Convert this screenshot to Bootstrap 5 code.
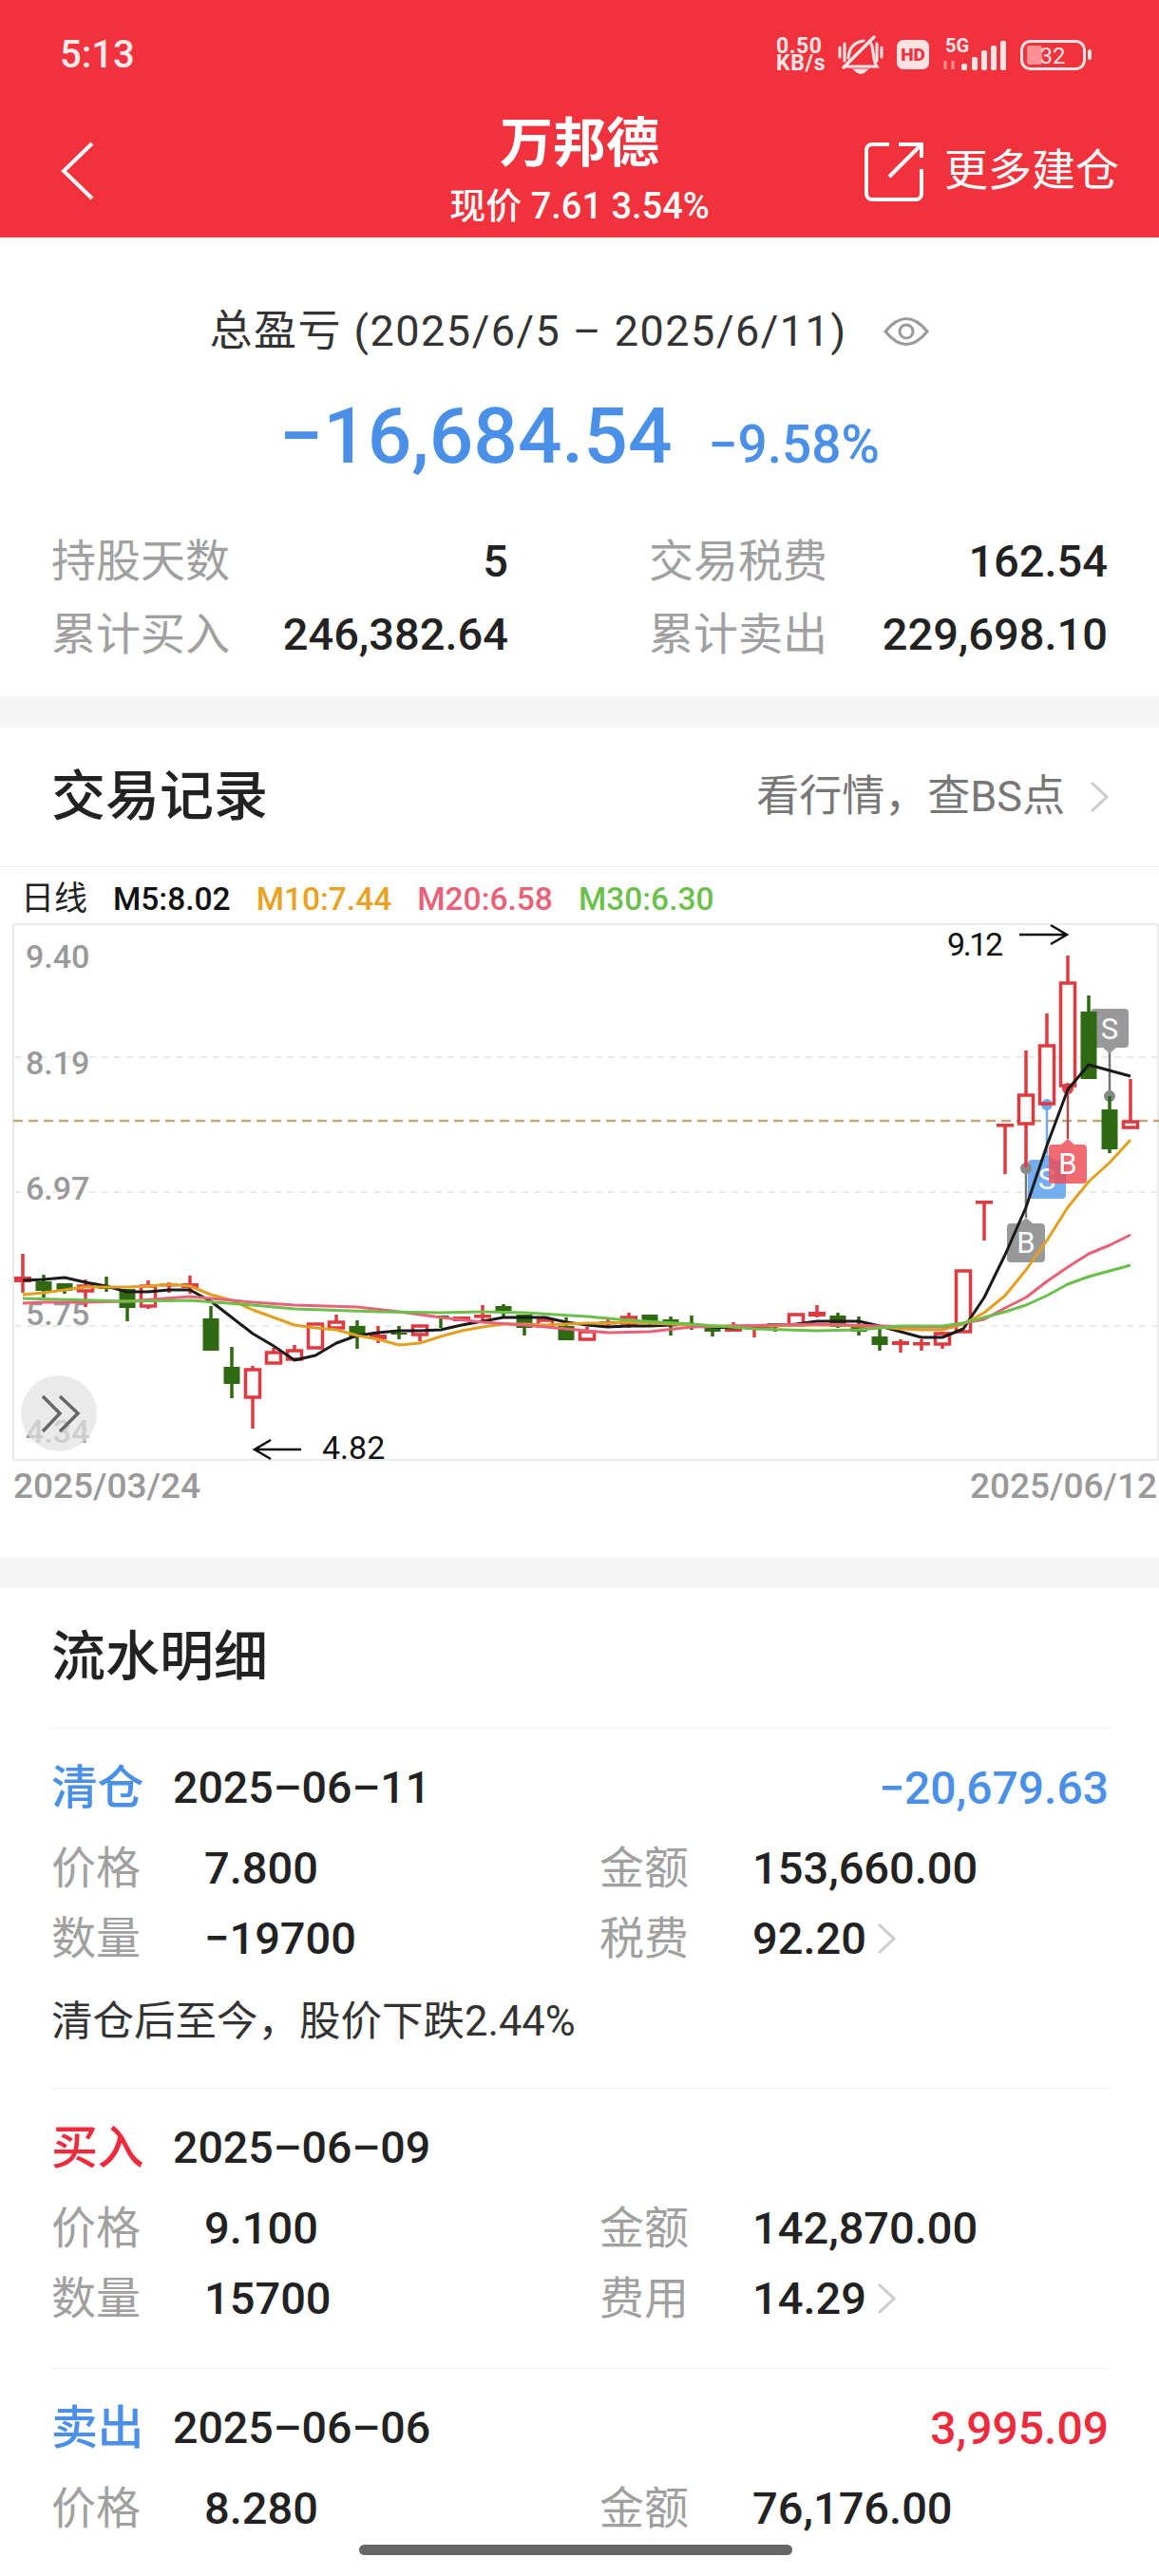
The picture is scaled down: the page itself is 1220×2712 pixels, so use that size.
<!doctype html>
<html lang="zh-CN">
<head>
<meta charset="utf-8">
<title>万邦德</title>
<link href="https://cdn.jsdelivr.net/npm/bootstrap@5.3.0/dist/css/bootstrap.min.css" rel="stylesheet">
<style>
html,body{height:2712px;overflow:hidden}
body{width:1220px;background:#f5f5f5;color:#222;font-family:Roboto,"Noto Sans CJK SC",sans-serif;font-size:46px;line-height:1.2}
.hdr{height:250px;background:#f1323c;color:#fff}
.stbar{height:100px;padding:23px 70px 0 63px}
.clock{font-size:40px;font-weight:500;color:#ffecec;line-height:70px}
.stico{gap:14px;color:#ffe6e6;height:70px}
.net{font-size:23px;font-weight:700;line-height:18px;width:51px;letter-spacing:.6px}
.navgrid{display:grid;grid-template-columns:1fr auto 1fr;height:150px}
.backwrap{padding:10px 0 0 62px}
.morewrap{padding:10px 42px 0 0;gap:22px;font-size:46px}
.ttl{font-size:56px;font-weight:700;line-height:64px;margin-top:19px}
.subttl{font-size:38px;font-weight:500;line-height:46px;margin-top:11px}
.sect-a{height:483px;padding-top:69px}
.rangeline{height:60px;font-size:45px;color:#333;letter-spacing:1.5px;gap:38px;padding-right:22px}
.rangeline span{white-space:nowrap}
.bigline{height:100px;margin-top:30px;color:#4a90e8;font-weight:500;gap:38px}
.bignum{font-size:82px;line-height:100px}
.bigpct{font-size:55px;line-height:1;padding-bottom:2px}
.stats{margin-top:43.5px}
.stat-l{padding:0 75px 0 54px}
.stat-r{padding:0 54px 0 73px}
.statrow{height:77px}
.lab{color:#a0a0a0;font-size:47px}
.val{color:#222;font-weight:500;font-size:47px}
.sect-b{margin-top:33px;height:874px}
.titlerow{height:147px;padding:0 53px 0 54px;border-bottom:1px solid #eee}
.hd2{font-size:57px;font-weight:500;color:#222}
.morelink{font-size:45px;color:#777;gap:26px}
.maline{height:59px;padding:8px 0 0 22px;font-size:33.5px;line-height:1}
.maline>span{margin-right:27px}
.c-ma0{color:#111;font-weight:500}
.c-ma1{color:#e8a21f;font-weight:500}
.c-ma2{color:#ea6078;font-weight:500}
.c-ma3{color:#6bc04b;font-weight:500}
.daylb{font-size:35px}
.chartbox{display:block;width:1220px;height:567px;overflow:visible}
.ovf{overflow:visible}
.tick{font-size:34px;font-weight:500;fill:#999;font-family:Roboto,sans-serif}
.note{font-size:34px;fill:#111;font-family:Roboto,sans-serif}
.mk{font-size:31px;fill:#fff;font-family:Roboto,sans-serif;text-anchor:middle}
.daterow{height:52px;padding:0 2px 0 14px;font-size:37px;font-weight:500;color:#999}
.sect-c{margin-top:32px;padding:0 53px;height:1040px}
.hdrow3{height:147px;padding-left:1px}
.item{border-top:1px solid #eee;padding:28px 0 36px}
.item.first{padding-bottom:34px}
.itemhead{height:70px;font-weight:500}
.kind{font-weight:500;width:129px;flex:none;font-size:49px;padding-left:1px;letter-spacing:-.5px}
.blue{color:#4a90e8}
.redtx{color:#ee2a3c}
.amt{font-size:48px;font-weight:500}
.datetx{font-size:46.5px;font-weight:500;color:#222}
.detail{margin-top:12px}
.drow{height:74px}
.drow .cell1{padding-left:1px}
.drow .cell2{padding-left:21px}
.lab2{width:161px;flex:none;color:#a0a0a0;font-size:47px}
.chev{margin-left:11px}
.tip{height:70px;margin-top:16px;padding-left:1px;font-size:43.5px;color:#333}
.homebar{position:absolute;left:378px;top:2679px;width:456px;height:11px;border-radius:6px;background:#666}
</style>
</head>
<body>
<header class="hdr">
  <div class="stbar d-flex justify-content-between align-items-start">
    <div class="clock">5:13</div>
    <div class="stico d-flex align-items-center">
      <div class="net"><div>0.50</div><div>KB/s</div></div>
      <svg width="48" height="42" viewBox="882 38 48 42" fill="none" stroke="currentColor" stroke-width="3" stroke-linecap="round" aria-hidden="true">
        <path d="M884 51V61M889 47V65M923 47V65M928 51V61"/>
        <path d="M893 62C894 50 901 45 909 44M917 47C920 52 918 64 923 71H890"/>
        <path d="M888 72L920 40" stroke-width="3.5"/>
        <path d="M901 75Q906 80 911 75Z" fill="currentColor"/>
      </svg>
      <svg width="34" height="32" viewBox="0 0 34 32" aria-hidden="true">
        <rect width="34" height="31" rx="7" fill="#ffe3e3"/>
        <text x="17" y="22" text-anchor="middle" font-family="Roboto,sans-serif" font-weight="900" font-size="19" fill="#f1323c">HD</text>
      </svg>
      <svg class="ovf" width="68" height="36" viewBox="992 40 68 36" aria-hidden="true">
        <text x="995" y="55" font-family="Roboto,sans-serif" font-weight="700" font-size="20" fill="currentColor">5G</text>
        <path d="M995 64V73M1003 64V73" stroke="#ff8f94" stroke-width="3"/>
        <g fill="currentColor"><rect x="1012" y="67" width="6" height="7" rx="2"/><rect x="1023" y="60" width="6" height="14" rx="2"/><rect x="1033" y="53" width="6" height="21" rx="2"/><rect x="1043" y="48" width="6" height="26" rx="2"/><rect x="1053" y="43" width="6" height="31" rx="2"/></g>
      </svg>
      <svg width="76" height="34" viewBox="1075 41 76 34" aria-hidden="true">
        <rect x="1076.5" y="43.5" width="66" height="29" rx="9" fill="none" stroke="currentColor" stroke-width="3"/>
        <rect x="1082" y="48" width="16" height="20" rx="3" fill="#ff8f94"/>
        <text x="1109" y="67" text-anchor="middle" font-family="Roboto,sans-serif" font-size="24" fill="currentColor">32</text>
        <rect x="1146" y="52" width="4" height="11" rx="2" fill="currentColor"/>
      </svg>
    </div>
  </div>
  <div class="navgrid">
    <div class="backwrap d-flex align-items-center">
      <svg width="40" height="64" viewBox="0 0 40 64" fill="none" stroke="#fff" stroke-width="4" aria-label="返回"><path d="M36 3L6 32L36 61" transform="translate(-1 0)"/></svg>
    </div>
    <div class="text-center">
      <div class="ttl">万邦德</div>
      <div class="subttl">现价 7.61 3.54%</div>
    </div>
    <div class="morewrap d-flex align-items-center justify-content-end">
      <svg width="64" height="64" viewBox="907 148 64 64" fill="none" stroke="#fff" stroke-width="4" aria-hidden="true">
        <path d="M935 152H917a6 6 0 0 0-6 6V204a6 6 0 0 0 6 6H963a6 6 0 0 0 6-6V178"/>
        <path d="M945 152H969V166M967 154L935 186"/>
      </svg>
      <span>更多建仓</span>
    </div>
  </div>
</header>

<section class="sect-a bg-white">
  <div class="rangeline d-flex align-items-center justify-content-center">
    <span>总盈亏 (2025/6/5 – 2025/6/11)</span>
    <svg width="48" height="34" viewBox="930 332 48 34" fill="none" stroke="#999" stroke-width="3" aria-label="显示"><path d="M932 349Q954 322 976 349Q954 376 932 349Z"/><circle cx="954" cy="349" r="7"/></svg>
  </div>
  <div class="bigline d-flex align-items-baseline justify-content-center">
    <span class="bignum">−16,684.54</span><span class="bigpct">−9.58%</span>
  </div>
  <div class="stats row g-0">
    <div class="col-6 stat-l">
      <div class="statrow d-flex justify-content-between align-items-center"><span class="lab">持股天数</span><span class="val">5</span></div>
      <div class="statrow d-flex justify-content-between align-items-center"><span class="lab">累计买入</span><span class="val">246,382.64</span></div>
    </div>
    <div class="col-6 stat-r">
      <div class="statrow d-flex justify-content-between align-items-center"><span class="lab">交易税费</span><span class="val">162.54</span></div>
      <div class="statrow d-flex justify-content-between align-items-center"><span class="lab">累计卖出</span><span class="val">229,698.10</span></div>
    </div>
  </div>
</section>

<section class="sect-b bg-white">
  <div class="titlerow d-flex justify-content-between align-items-center">
    <div class="hd2">交易记录</div>
    <div class="morelink d-flex align-items-center">
      <span>看行情，查BS点</span>
      <svg width="20" height="34" viewBox="0 0 20 34" fill="none" stroke="#ccc" stroke-width="3" aria-hidden="true"><path d="M2 2L18 17L2 32"/></svg>
    </div>
  </div>
  <div class="maline d-flex align-items-center"><span class="daylb">日线</span><span class="c-ma0">M5:8.02</span><span class="c-ma1">M10:7.44</span><span class="c-ma2">M20:6.58</span><span class="c-ma3">M30:6.30</span></div>
  <svg class="chartbox" viewBox="0 973 1220 567" aria-label="K线图">
    <path d="M14 974H1219M14 974V1538M14 1538H1219M1219 974V1538" fill="none" stroke="#eaeaea" stroke-width="2"/>
    <path d="M16 1114H1218M16 1256H1218M16 1397H1218" stroke="#e4e4e4" stroke-width="1.5" stroke-dasharray="7 6"/>
    <path d="M14 1181H1220" stroke="#c4a674" stroke-width="2.5" stroke-dasharray="10 6"/>
    <text class="tick" x="27" y="1020">9.40</text>
    <text class="tick" x="27" y="1132">8.19</text>
    <text class="tick" x="27" y="1264">6.97</text>
    <text class="tick" x="27" y="1396">5.75</text>
    <text class="tick" x="27" y="1520">4.34</text>
    <g id="cbg"></g>
    <!-- buy / sell markers -->
    <path d="M1168 1109V1155" stroke="#777" stroke-width="2.5"/><circle cx="1168" cy="1155" r="6" fill="#888"/>
    <path d="M1168 1110l-7-6h-9a4 4 0 0 1-4-4v-33a4 4 0 0 1 4-4h32a4 4 0 0 1 4 4v33a4 4 0 0 1-4 4h-9z" fill="#999"/>
    <text class="mk" x="1168" y="1095">S</text>
    <path d="M1102 1216V1164" stroke="#6ea9ea" stroke-width="2.5"/><circle cx="1102" cy="1164" r="6" fill="#6ea9ea"/>
    <path d="M1102 1216l7 6h9a4 4 0 0 1 4 4v33a4 4 0 0 1-4 4h-32a4 4 0 0 1-4-4v-33a4 4 0 0 1 4-4h9z" fill="#72aef0"/>
    <text class="mk" x="1102" y="1253">S</text>
    <path d="M1124 1200V1147" stroke="#b04a4e" stroke-width="2.5"/><circle cx="1124" cy="1147" r="6" fill="#e04046"/>
    <path d="M1124 1200l7 6h9a4 4 0 0 1 4 4v33a4 4 0 0 1-4 4h-32a4 4 0 0 1-4-4v-33a4 4 0 0 1 4-4h9z" fill="#ec4f56" fill-opacity=".84"/>
    <text class="mk" x="1124" y="1237">B</text>
    <path d="M1080 1283V1231" stroke="#777" stroke-width="2.5"/><circle cx="1080" cy="1231" r="6" fill="#888"/>
    <path d="M1080 1283l7 6h9a4 4 0 0 1 4 4v33a4 4 0 0 1-4 4h-32a4 4 0 0 1-4-4v-33a4 4 0 0 1 4-4h9z" fill="#999"/>
    <text class="mk" x="1080" y="1320">B</text>
    <g id="cfg"></g>
    <polyline fill="none" stroke="#1a1a1a" stroke-width="3" stroke-linejoin="round" points="24,1349 46,1348 68,1346 90,1351 112,1355 134,1361 156,1361 178,1359 200,1359 222,1371 244,1388 266,1405 288,1418 310,1433 332,1428 354,1415 376,1407 398,1404 420,1402 442,1402 464,1401 486,1396 508,1392 530,1388 552,1388 574,1388 596,1393 618,1396 640,1398 662,1397 684,1397 706,1396 728,1395 750,1398 772,1399 794,1398 816,1397 838,1395 860,1392 882,1392 904,1392 926,1397 948,1403 970,1409 992,1409 1014,1400 1036,1367 1058,1322 1080,1272 1102,1207 1124,1148 1146,1122 1168,1128 1190,1134"/>
    <polyline fill="none" stroke="#e3a020" stroke-width="3" stroke-linejoin="round" points="24,1364 46,1362 68,1359 90,1356 112,1356 134,1356 156,1355 178,1353 200,1355 222,1364 244,1370 266,1380 288,1388 310,1396 332,1399 354,1401 376,1407 398,1411 420,1417 442,1415 464,1408 486,1402 508,1398 530,1395 552,1395 574,1396 596,1395 618,1394 640,1394 662,1393 684,1394 706,1395 728,1396 750,1397 772,1397 794,1397 816,1397 838,1396 860,1396 882,1396 904,1397 926,1398 948,1400 970,1401 992,1401 1014,1395 1036,1383 1058,1365 1080,1338 1102,1307 1124,1272 1146,1245 1168,1225 1190,1201"/>
    <polyline fill="none" stroke="#ea6078" stroke-width="3" stroke-linejoin="round" points="24,1373 46,1372 90,1372 134,1371 200,1366 222,1368 266,1372 310,1375 376,1377 420,1382 464,1388 508,1393 552,1396 596,1400 640,1404 684,1403 728,1398 772,1397 816,1396 860,1395 926,1397 970,1398 992,1398 1014,1394 1036,1390 1058,1378 1080,1367 1102,1350 1124,1335 1146,1321 1168,1312 1190,1301"/>
    <polyline fill="none" stroke="#6bc04b" stroke-width="3" stroke-linejoin="round" points="24,1368 134,1371 200,1370 266,1375 310,1379 398,1382 464,1383 508,1382 552,1383 618,1387 662,1391 728,1395 794,1400 860,1402 904,1401 948,1397 992,1397 1014,1394 1036,1388 1058,1382 1080,1375 1102,1365 1124,1353 1146,1345 1168,1339 1190,1333"/>
    <path d="M317 1527H268M285 1517L268 1527L285 1537M1073 985H1123M1106 975L1123 985L1106 995" fill="none" stroke="#111" stroke-width="2.5"/>
    <text class="note" x="339" y="1537">4.82</text>
    <text class="note" x="997" y="1007" letter-spacing="-2.4">9.12</text>
    <circle cx="62" cy="1489" r="40" fill="#e2e2e2" fill-opacity=".72"/>
    <path d="M45 1471L63 1489L45 1508M63 1471L82 1489L63 1508" fill="none" stroke="#666" stroke-width="3.5"/>
  </svg>
  <div class="daterow d-flex justify-content-between align-items-center"><span>2025/03/24</span><span>2025/06/12</span></div>
</section>

<section class="sect-c bg-white">
  <div class="hdrow3 d-flex align-items-center"><div class="hd2">流水明细</div></div>

  <article class="item first">
    <div class="itemhead d-flex align-items-center"><span class="kind blue">清仓</span><span class="datetx flex-grow-1">2025–06–11</span><span class="amt blue">−20,679.63</span></div>
    <div class="detail">
      <div class="row g-0 drow align-items-center"><div class="col-6 cell1 d-flex align-items-center"><span class="lab2">价格</span><span class="val">7.800</span></div><div class="col-6 cell2 d-flex align-items-center"><span class="lab2">金额</span><span class="val">153,660.00</span></div></div>
      <div class="row g-0 drow align-items-center"><div class="col-6 cell1 d-flex align-items-center"><span class="lab2">数量</span><span class="val">−19700</span></div><div class="col-6 cell2 d-flex align-items-center"><span class="lab2">税费</span><span class="val">92.20</span><svg class="chev" width="20" height="34" viewBox="0 0 20 34" fill="none" stroke="#ccc" stroke-width="3" aria-hidden="true"><path d="M2 2L18 17L2 32"/></svg></div></div>
    </div>
    <div class="tip d-flex align-items-center">清仓后至今，股价下跌2.44%</div>
  </article>

  <article class="item">
    <div class="itemhead d-flex align-items-center"><span class="kind redtx">买入</span><span class="datetx flex-grow-1">2025–06–09</span></div>
    <div class="detail">
      <div class="row g-0 drow align-items-center"><div class="col-6 cell1 d-flex align-items-center"><span class="lab2">价格</span><span class="val">9.100</span></div><div class="col-6 cell2 d-flex align-items-center"><span class="lab2">金额</span><span class="val">142,870.00</span></div></div>
      <div class="row g-0 drow align-items-center"><div class="col-6 cell1 d-flex align-items-center"><span class="lab2">数量</span><span class="val">15700</span></div><div class="col-6 cell2 d-flex align-items-center"><span class="lab2">费用</span><span class="val">14.29</span><svg class="chev" width="20" height="34" viewBox="0 0 20 34" fill="none" stroke="#ccc" stroke-width="3" aria-hidden="true"><path d="M2 2L18 17L2 32"/></svg></div></div>
    </div>
  </article>

  <article class="item">
    <div class="itemhead d-flex align-items-center"><span class="kind blue">卖出</span><span class="datetx flex-grow-1">2025–06–06</span><span class="amt redtx">3,995.09</span></div>
    <div class="detail">
      <div class="row g-0 drow align-items-center"><div class="col-6 cell1 d-flex align-items-center"><span class="lab2">价格</span><span class="val">8.280</span></div><div class="col-6 cell2 d-flex align-items-center"><span class="lab2">金额</span><span class="val">76,176.00</span></div></div>
    </div>
  </article>
</section>
<div class="homebar"></div>

<script src="https://cdn.jsdelivr.net/npm/bootstrap@5.3.0/dist/js/bootstrap.bundle.min.js"></script>
<script>
// type, wick top, body top, body bottom, wick bottom
const K=[['r',1321,1345,1351,1362],['g',1343,1350,1360,1367],['g',1352,1352,1360,1363],['r',1348,1354,1361,1377],['g',1345,1355,1358,1361],['g',1358,1358,1378,1392],['r',1349,1354,1377,1379],['r',1351,1352,1355,1362],['r',1344,1352,1357,1363],['g',1376,1389,1423,1423],['g',1419,1440,1458,1473],['r',1439,1442,1473,1505],['r',1420,1424,1437,1437],['r',1417,1422,1433,1433],['r',1394,1394,1421,1421],['r',1385,1392,1400,1400],['g',1391,1397,1409,1421],['r',1397,1406,1411,1415],['g',1397,1404,1406,1411],['r',1396,1396,1407,1413],['g',1386,1386,1388,1399],['r',1387,1387,1392,1392],
['r',1375,1385,1388,1392],['g',1374,1376,1381,1387],['g',1385,1385,1399,1407],['r',1387,1390,1398,1398],['g',1388,1397,1412,1412],['r',1398,1402,1412,1412],['r',1390,1392,1395,1397],['r',1383,1387,1395,1399],['g',1385,1385,1392,1397],['g',1387,1390,1393,1407],['g',1386,1394,1395,1401],['g',1397,1397,1403,1408],['r',1393,1398,1403,1403],['r',1395,1395,1401,1409],['g',1395,1394,1396,1403],['r',1384,1384,1397,1397],['r',1375,1382,1387,1388],['g',1383,1386,1398,1399],['g',1387,1398,1403,1407],['g',1400,1408,1417,1423],['r',1411,1413,1417,1425],['r',1411,1414,1417,1423],['r',1403,1404,1417,1421],['r',1338,1338,1404,1404],
['t',1265,1265,1268,1307],['t',1184,1184,1187,1237],['r',1107,1153,1185,1230],['r',1068,1101,1164,1164],['r',1007,1035,1145,1145],['g',1049,1066,1137,1137],['g',1155,1169,1211,1215],['r',1137,1181,1189,1189]];
let bg='',fg='';
K.forEach((c,i)=>{
  const x=24+22*i,[t,wt,bt,bb,wb]=c,col=t==='g'?'#2f6a12':'#df3a40';
  const wick=(a,b)=>b>a?`<path d="M${x} ${a}V${b}" stroke="${col}" stroke-width="3.5"/>`:'';
  fg+=wick(wt,bt)+wick(bb,wb);
  if(t==='g'){fg+=`<rect x="${x-8.5}" y="${bt}" width="17" height="${bb-bt}" fill="${col}"/>`;}
  else if(t==='t'||bb-bt<=6){fg+=`<rect x="${x-9}" y="${bt}" width="18" height="${Math.max(bb-bt,3.5)}" fill="${col}"/>`;}
  else{
    bg+=`<rect x="${x-7.5}" y="${bt+1}" width="15" height="${bb-bt-2}" fill="#fff"/>`;
    fg+=`<rect x="${x-7.5}" y="${bt+1}" width="15" height="${bb-bt-2}" fill="none" stroke="${col}" stroke-width="3.5"/>`;
  }
});
document.getElementById('cbg').innerHTML=bg;
document.getElementById('cfg').innerHTML=fg;
</script>
</body>
</html>
